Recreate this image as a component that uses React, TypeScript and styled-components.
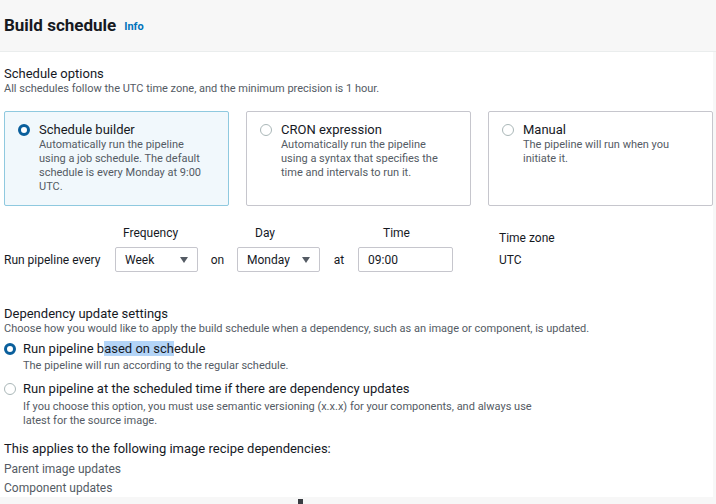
import React from 'react'
import styled, { createGlobalStyle } from 'styled-components'

const GlobalStyle = createGlobalStyle`
  html, body {
    margin: 0;
    padding: 0;
    background: #f7f7f7;
  }
  body {
    font-family: Roboto, "Open Sans", sans-serif;
    color: #16191f;
  }
`

const Page = styled.div`
  width: 716px;
  height: 504px;
  overflow: hidden;
  display: flex;
  flex-direction: column;
  background: #f7f7f7;
`

const Header = styled.div`
  height: 52px;
  display: flex;
  align-items: center;
  padding: 0 4px;
  gap: 8px;
  border-bottom: 1px solid #eaeded;
  box-sizing: border-box;
`

const Title = styled.h2`
  margin: 0 0 2px;
  font-size: 17px;
  font-weight: 700;
  color: #16191f;
`

const InfoLink = styled.a`
  font-size: 11px;
  font-weight: 700;
  color: #0073bb;
  margin-top: 2px;
`

const Body = styled.div`
  background: #fff;
  width: 713px;
  height: 445px;
  padding: 14px 0 0 4px;
  box-sizing: border-box;
  position: relative;
`

const Heading = styled.div`
  font-size: 13px;
  color: #16191f;
  line-height: 16px;
`

const Hint = styled.div`
  font-size: 11px;
  color: #545b64;
  line-height: 14px;
`

const Cards = styled.div`
  display: grid;
  grid-template-columns: 225px 225px 225px;
  column-gap: 17px;
  margin-top: 15px;
`

const Card = styled.div<{ $active?: boolean }>`
  height: 95px;
  box-sizing: border-box;
  border: 1px solid ${(p) => (p.$active ? '#8fc9df' : '#c6c6cd')};
  background: ${(p) => (p.$active ? '#f1f8fc' : '#fff')};
  border-radius: 2px;
  padding: 10px 8px 0 13px;
  display: flex;
  gap: 9px;
`

const Radio = styled.span<{ $on?: boolean }>`
  flex: none;
  width: 12px;
  height: 12px;
  border-radius: 50%;
  box-sizing: border-box;
  margin-top: 2px;
  border: ${(p) => (p.$on ? '3.5px solid #0a5f9c' : '1px solid #aab7b8')};
  background: #fff;
`

const OptionText = styled.div`
  display: flex;
  flex-direction: column;
`

const OptionTitle = styled.div`
  font-size: 13px;
  color: #16191f;
  line-height: 16px;
`

const OptionDesc = styled.div`
  font-size: 11px;
  color: #545b64;
  line-height: 14px;
  white-space: nowrap;
`

const ScheduleRow = styled.div`
  display: grid;
  grid-template-columns: 111px 83px 39px 83px 38px 95px 46px auto;
  grid-template-rows: 17px 25px;
  row-gap: 6px;
  margin-top: 18px;
  align-items: center;
  font-size: 12px;
  color: #16191f;
`

const FieldLabel = styled.div<{ $col: number; $indent: number; $shift?: number }>`
  grid-column: ${(p) => p.$col};
  grid-row: 1;
  padding-left: ${(p) => p.$indent}px;
  margin-top: ${(p) => p.$shift || 0}px;
  font-size: 12px;
  white-space: nowrap;
`

const Inline = styled.div<{ $center?: boolean }>`
  grid-row: 2;
  text-align: ${(p) => (p.$center ? 'center' : 'left')};
`

const Select = styled.div`
  grid-row: 2;
  height: 25px;
  box-sizing: border-box;
  border: 1px solid #c6c6cd;
  border-radius: 2px;
  display: flex;
  align-items: center;
  justify-content: space-between;
  padding: 0 9px 0 9px;
  font-size: 12px;
`

const Caret = styled.span`
  width: 0;
  height: 0;
  border-left: 4px solid transparent;
  border-right: 4px solid transparent;
  border-top: 6px solid #545b64;
`

const TextInput = styled.div`
  grid-row: 2;
  height: 25px;
  box-sizing: border-box;
  border: 1px solid #c6c6cd;
  border-radius: 2px;
  display: flex;
  align-items: center;
  padding: 0 9px;
  font-size: 12px;
`

const Section = styled.div<{ $top: number }>`
  margin-top: ${(p) => p.$top}px;
`

const Choice = styled.div<{ $top: number }>`
  display: flex;
  gap: 7px;
  margin-top: ${(p) => p.$top}px;
`

const ChoiceTitle = styled.div`
  font-size: 13px;
  line-height: 16px;
  color: #16191f;
`

const ChoiceDesc = styled.div<{ $top?: number }>`
  font-size: 11px;
  line-height: 14px;
  color: #545b64;
  margin-top: ${(p) => p.$top ?? 2}px;
  white-space: nowrap;
`

const Selected = styled.span`
  background: #b3d4f7;
`

const DepItem = styled.div`
  font-size: 12px;
  line-height: 19px;
  color: #545b64;
`

const Footer = styled.div`
  flex: 1;
  position: relative;
  background: #f7f7f7;
`

const TextCaret = styled.span`
  position: absolute;
  left: 298px;
  top: 2px;
  width: 5px;
  height: 8px;
  background: #3a3d42;
`

export default function App() {
  return (
    <Page>
      <GlobalStyle />
      <Header>
        <Title>Build schedule</Title>
        <InfoLink>Info</InfoLink>
      </Header>
      <Body>
        <Heading>Schedule options</Heading>
        <Hint>All schedules follow the UTC time zone, and the minimum precision is 1 hour.</Hint>
        <Cards>
          <Card $active>
            <Radio $on />
            <OptionText>
              <OptionTitle>Schedule builder</OptionTitle>
              <OptionDesc>
                Automatically run the pipeline
                <br />
                using a job schedule. The default
                <br />
                schedule is every Monday at 9:00
                <br />
                UTC.
              </OptionDesc>
            </OptionText>
          </Card>
          <Card>
            <Radio />
            <OptionText>
              <OptionTitle>CRON expression</OptionTitle>
              <OptionDesc>
                Automatically run the pipeline
                <br />
                using a syntax that specifies the
                <br />
                time and intervals to run it.
              </OptionDesc>
            </OptionText>
          </Card>
          <Card>
            <Radio />
            <OptionText>
              <OptionTitle>Manual</OptionTitle>
              <OptionDesc>
                The pipeline will run when you
                <br />
                initiate it.
              </OptionDesc>
            </OptionText>
          </Card>
        </Cards>
        <ScheduleRow>
          <FieldLabel $col={2} $indent={8}>
            Frequency
          </FieldLabel>
          <FieldLabel $col={4} $indent={18}>
            Day
          </FieldLabel>
          <FieldLabel $col={6} $indent={25}>
            Time
          </FieldLabel>
          <FieldLabel $col={8} $indent={0} $shift={10}>
            Time zone
          </FieldLabel>
          <Inline>Run pipeline every</Inline>
          <Select>
            Week <Caret />
          </Select>
          <Inline $center>on</Inline>
          <Select>
            Monday <Caret />
          </Select>
          <Inline $center>at</Inline>
          <TextInput>09:00</TextInput>
          <Inline />
          <Inline>UTC</Inline>
        </ScheduleRow>
        <Section $top={34}>
          <Heading>Dependency update settings</Heading>
          <Hint>
            Choose how you would like to apply the build schedule when a dependency, such as an
            image or component, is updated.
          </Hint>
        </Section>
        <Choice $top={5}>
          <Radio $on />
          <OptionText>
            <ChoiceTitle>
              Run pipeline b<Selected>ased on sch</Selected>edule
            </ChoiceTitle>
            <ChoiceDesc>The pipeline will run according to the regular schedule.</ChoiceDesc>
          </OptionText>
        </Choice>
        <Choice $top={8}>
          <Radio />
          <OptionText>
            <ChoiceTitle>Run pipeline at the scheduled time if there are dependency updates</ChoiceTitle>
            <ChoiceDesc $top={3}>
              If you choose this option, you must use semantic versioning (x.x.x) for your
              components, and always use
              <br />
              latest for the source image.
            </ChoiceDesc>
          </OptionText>
        </Choice>
        <Section $top={13}>
          <Heading>This applies to the following image recipe dependencies:</Heading>
        </Section>
        <Section $top={3}>
          <DepItem>Parent image updates</DepItem>
          <DepItem>Component updates</DepItem>
        </Section>
      </Body>
      <Footer>
        <TextCaret />
      </Footer>
    </Page>
  )
}
